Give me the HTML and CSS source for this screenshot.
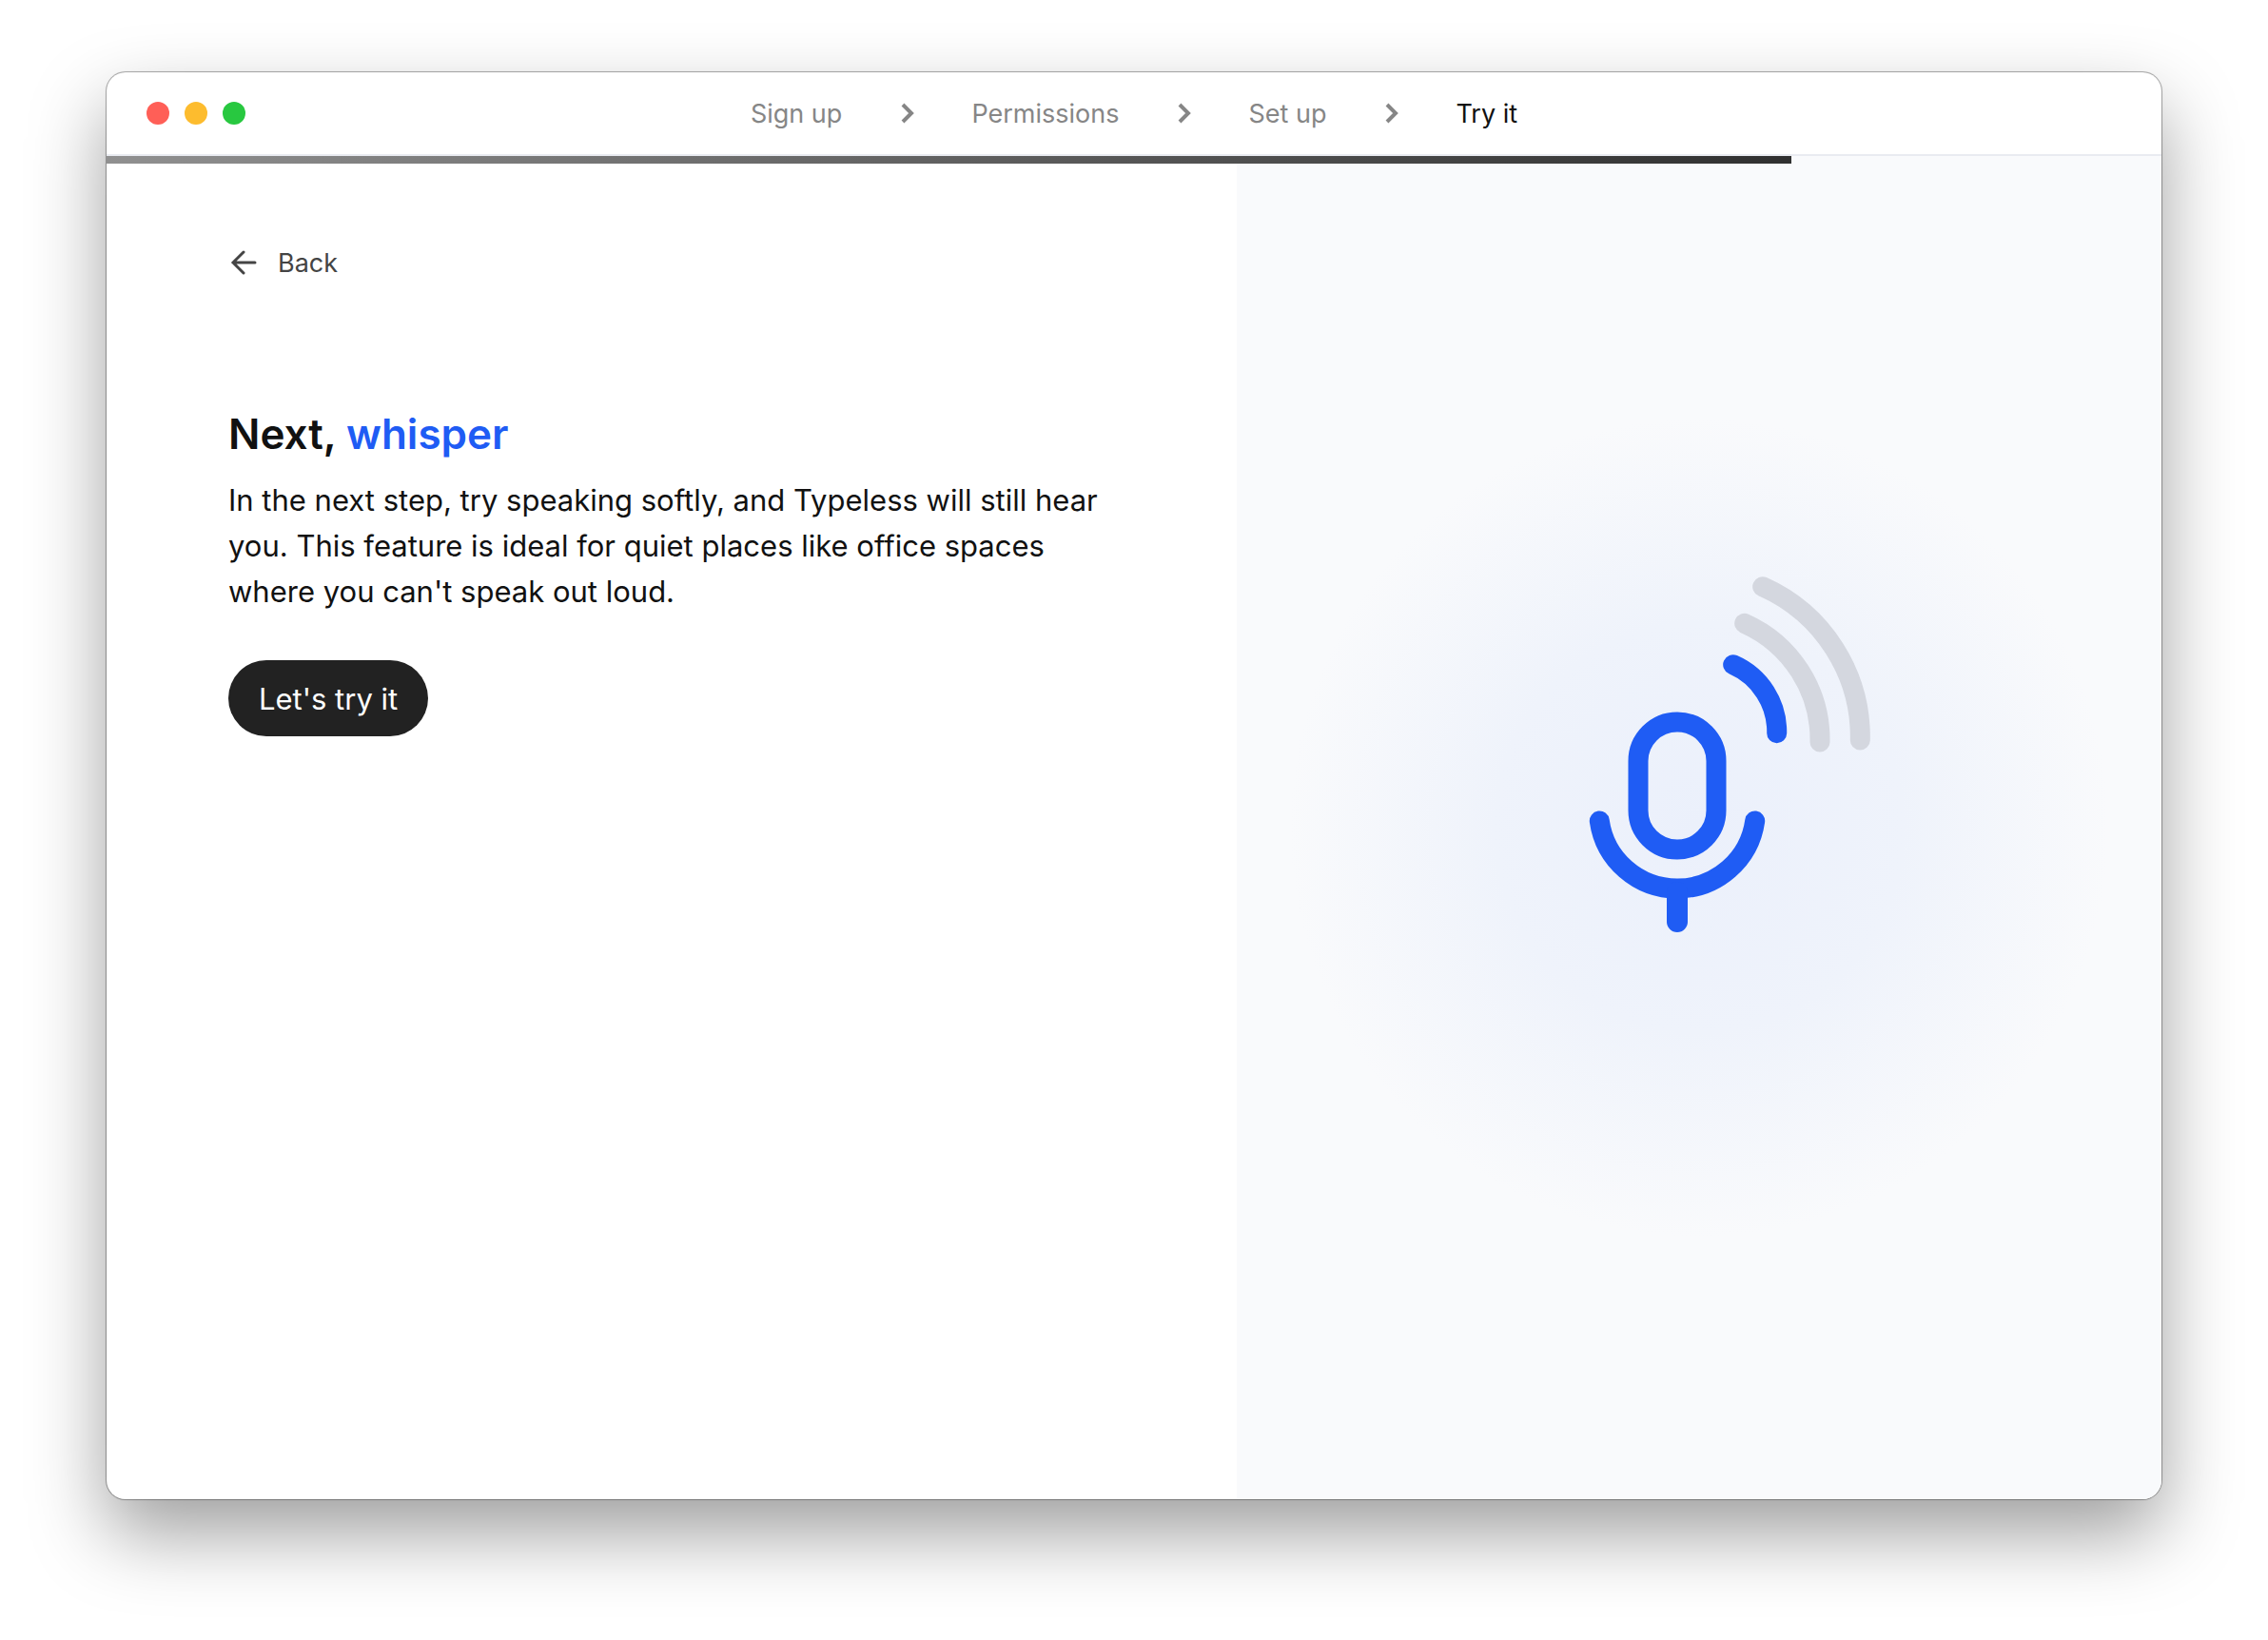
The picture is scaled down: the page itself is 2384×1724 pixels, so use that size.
FILE: index.html
```html
<!DOCTYPE html>
<html lang="en">
<head>
    <meta charset="UTF-8">
    <meta name="viewport" content="width=device-width, initial-scale=1.0">
    <title>Typeless</title>
    <link rel="stylesheet" href="styles.css">
</head>
<body>

<div class="window">
    <header class="titlebar">
        <div class="lights">
            <span class="light red"></span>
            <span class="light yellow"></span>
            <span class="light green"></span>
        </div>
        <nav class="steps">
            <span class="step">Sign up</span>
            <svg class="chevron" viewBox="0 0 32 32"><path d="M12 7l9 9-9 9"/></svg>
            <span class="step">Permissions</span>
            <svg class="chevron" viewBox="0 0 32 32"><path d="M12 7l9 9-9 9"/></svg>
            <span class="step">Set up</span>
            <svg class="chevron" viewBox="0 0 32 32"><path d="M12 7l9 9-9 9"/></svg>
            <span class="step active">Try it</span>
        </nav>
    </header>

    <main class="content">
        <div class="progress">
            <div class="progress-bar" style="width: 82%"></div>
        </div>

        <section class="left">
            <button type="button" class="back">
                <svg class="back-icon" viewBox="0 0 32 32"><path d="M28 16H5M16 5L5 16l11 11"/></svg>
                Back
            </button>
            <h1>Next, <span class="accent">whisper</span></h1>
            <p>In the next step, try speaking softly, and Typeless will still hear you. This feature is ideal for quiet places like office spaces where you can't speak out loud.</p>
            <button type="button" class="try">Let's try it</button>
        </section>

        <section class="right">
            <svg class="mic" viewBox="0 0 860 860">
                <defs>
                    <radialGradient id="glow">
                        <stop offset="0" stop-color="#ebf0fb"/>
                        <stop offset="0.5" stop-color="#eff3fb"/>
                        <stop offset="1" stop-color="#f9fafc"/>
                    </radialGradient>
                </defs>
                <circle cx="430" cy="430" r="430" fill="url(#glow)"/>
                <g class="mic-lines" transform="translate(312 165)">
                    <!-- microphone -->
                    <rect x="54" y="154" width="82" height="134" rx="41"/>
                    <path d="M13.3 258A82.5 82.5 0 0 0 176.7 258"/>
                    <path class="stem" d="M95 333v31"/>
                    <!-- sound waves -->
                    <path d="M153.7 93.7A77 77 0 0 1 199.7 165.7"/>
                    <path class="off" d="M165.7 50.3A134 134 0 0 1 245 175"/>
                    <path class="off" d="M184.7 11.7A173 173 0 0 1 287.3 173"/>
                </g>
            </svg>
        </section>
    </main>
</div>

</body>
</html>
```
FILE: styles.css
```css
* {
    box-sizing: border-box;
}
body {
    margin: 0;
    min-height: 100vh;
    padding: 76px 112px 148px;
    display: flex;
    background-color: #fff;
    color: #111;
    font-family: Inter, "Liberation Sans", sans-serif;
}
button {
    border: none;
    font-family: inherit;
    cursor: pointer;
}
.window {
    flex: 1;
    display: flex;
    flex-direction: column;
    overflow: hidden;
    border-radius: 20px;
    background-color: #fff;
    box-shadow: 0 0 0 1px rgba(0, 0, 0, 0.25), 0 0 2px rgba(0, 0, 0, 0.3), 0 36px 80px rgba(0, 0, 0, 0.38);
}

/* title bar */
.titlebar {
    display: grid;
    grid-template-columns: 1fr auto 1fr;
    align-items: center;
    height: 88px;
    padding: 0 42px;
    border-bottom: 2px solid #e9ebf1;
}
.lights {
    display: flex;
    gap: 16px;
}
.light {
    width: 24px;
    height: 24px;
    border-radius: 50%;
}
.red {
    background-color: #ff5f57;
}
.yellow {
    background-color: #fdbc2e;
}
.green {
    background-color: #28c840;
}
.steps {
    display: flex;
    align-items: center;
    gap: 52px;
    font-size: 27px;
}
.step {
    color: #868686;
}
.step.active {
    color: #111;
}
.chevron {
    width: 32px;
    height: 32px;
    fill: none;
    stroke: #868686;
    stroke-width: 4;
}

/* content */
.content {
    position: relative;
    flex: 1;
    display: grid;
    grid-template-columns: 55fr 45fr;
}
.progress {
    position: absolute;
    top: 0;
    left: 0;
    width: 100%;
    height: 8px;
}
.progress-bar {
    height: 100%;
    background: linear-gradient(to right, #909090, #303030);
}
.left {
    padding: 88px 128px;
}
.back {
    display: flex;
    align-items: center;
    gap: 20px;
    height: 48px;
    padding: 0;
    background: none;
    color: #444;
    font-size: 27px;
}
.back-icon {
    width: 32px;
    height: 32px;
    fill: none;
    stroke: #444;
    stroke-width: 3;
    stroke-linecap: round;
}
h1 {
    margin: 124px 0 14px;
    font-size: 44px;
    line-height: 64px;
    font-weight: 600;
}
.accent {
    color: #1f5cf4;
}
p {
    margin: 0 0 48px;
    font-size: 31px;
    line-height: 48px;
}
.try {
    height: 80px;
    padding: 0 32px;
    border-radius: 40px;
    background-color: #222;
    color: #fff;
    font-size: 31px;
}
.right {
    display: flex;
    align-items: center;
    justify-content: center;
    background-color: #f9fafc;
}
.mic {
    width: 860px;
    max-width: 100%;
}
.mic-lines {
    fill: none;
    stroke: #1f5cf4;
    stroke-width: 21;
    stroke-linecap: round;
}
.stem {
    stroke-width: 22;
}
.off {
    stroke: #d4d7df;
}
```
